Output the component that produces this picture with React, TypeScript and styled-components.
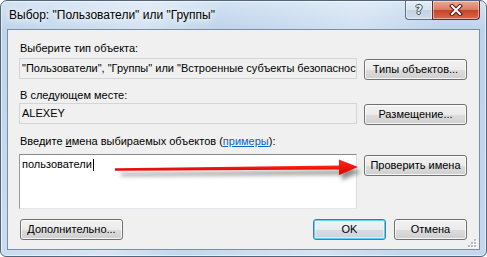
import React from 'react';
import styled, { createGlobalStyle } from 'styled-components';

const GlobalStyle = createGlobalStyle`
  html, body { margin: 0; padding: 0; background: #ffffff; }
  body { font-family: "Liberation Sans", Arial, sans-serif; }
`;

const Window = styled.div`
  position: relative;
  box-sizing: border-box;
  width: 487px;
  height: 257px;
  display: flex;
  flex-direction: column;
  padding: 0 6px 6px 6px;
  border: 1px solid #52657a;
  border-radius: 7px 7px 6px 6px;
  background:
    linear-gradient(100deg, rgba(255,255,255,0) 0%, rgba(255,255,255,0.35) 28%, rgba(255,255,255,0) 42%, rgba(255,255,255,0.3) 68%, rgba(255,255,255,0) 84%),
    linear-gradient(180deg, #d3e3f3 0px, #bed4eb 28px, #c3d8ee 100%);
  box-shadow: inset 0 0 0 1px rgba(255,255,255,0.55);
  overflow: hidden;
`;

const TitleBar = styled.div`
  height: 28px;
  flex-shrink: 0;
  display: flex;
  align-items: flex-start;
  justify-content: space-between;
`;

const Title = styled.div`
  padding: 7px 0 0 2px;
  font-size: 12px;
  line-height: 15px;
  color: #000;
  white-space: nowrap;
  text-shadow: 0 0 6px #fff, 0 0 10px rgba(255,255,255,0.9);
`;

const CaptionButtons = styled.div`
  display: flex;
`;

const CaptionButton = styled.div<{ $kind: 'help' | 'close' }>`
  box-sizing: border-box;
  height: 19px;
  width: ${p => (p.$kind === 'help' ? 27 : 48)}px;
  display: flex;
  align-items: center;
  justify-content: center;
  border: 1px solid ${p => (p.$kind === 'help' ? '#5d6f84' : '#6b2b22')};
  border-top: none;
  ${p => (p.$kind === 'help' ? 'border-right: none;' : '')}
  border-radius: ${p => (p.$kind === 'help' ? '0 0 0 4px' : '0 0 4px 0')};
  background: ${p =>
    p.$kind === 'help'
      ? 'linear-gradient(180deg, #e6eef7 0%, #d6e2ef 50%, #c2d2e3 52%, #cfdcea 100%)'
      : 'linear-gradient(180deg, #e9a895 0%, #dc7d66 48%, #c8432b 52%, #d56a4c 100%)'};
  box-shadow: inset 0 0 0 1px rgba(255,255,255,0.45);
`;

const HelpGlyph = styled.span`
  font-family: "DejaVu Sans", sans-serif;
  font-weight: bold;
  font-size: 12px;
  line-height: 12px;
  color: #eef2f6;
  text-shadow: 1px 0 0 #3a4858, -1px 0 0 #3a4858, 0 1px 0 #3a4858, 0 -1px 0 #3a4858;
`;

const Client = styled.div`
  position: relative;
  flex: 1;
  display: flex;
  flex-direction: column;
  padding: 0 12px 0 11px;
  border: 1px solid #7b8ea3;
  background: #f0f0f0;
  font-size: 11px;
  line-height: 13px;
  color: #000;
`;

const Label = styled.div<{ $top: number }>`
  margin-top: ${p => p.$top}px;
  padding-left: 1px;
  height: 13px;
  white-space: nowrap;
`;

const AccessKey = styled.span`
  text-decoration: underline;
`;

const Link = styled.span`
  color: #0066cc;
  text-decoration: underline;
`;

const Row = styled.div<{ $top: number }>`
  margin-top: ${p => p.$top}px;
  display: flex;
  align-items: flex-start;
  gap: 7px;
`;

const ReadOnlyBox = styled.div`
  box-sizing: border-box;
  flex-shrink: 0;
  width: 338px;
  height: 21px;
  padding: 3px 2px;
  border: 1px solid #d5d5d5;
  background: #f0f0f0;
  overflow: hidden;
  white-space: nowrap;
`;

const NamesBox = styled.div`
  box-sizing: border-box;
  flex-shrink: 0;
  width: 338px;
  height: 55px;
  padding: 3px 2px;
  border: 1px solid;
  border-color: #8a8a8a #dadde2 #e3e6ea #9a9a9a;
  background: #ffffff;
  white-space: nowrap;
`;

const Caret = styled.span`
  display: inline-block;
  width: 1px;
  height: 12px;
  margin-left: 1px;
  background: #000;
  vertical-align: -3px;
`;

const Button = styled.button<{ $width: number; $drop?: number; $isDefault?: boolean; $left?: number }>`
  box-sizing: border-box;
  flex-shrink: 0;
  width: ${p => p.$width}px;
  height: 21px;
  margin: ${p => p.$drop ?? 0}px 0 0 ${p => p.$left ?? 0}px;
  padding: 0;
  font-family: "Liberation Sans", Arial, sans-serif;
  font-size: 11px;
  line-height: 13px;
  color: #000;
  border: 1px solid ${p => (p.$isDefault ? '#3c7fb1' : '#707070')};
  border-radius: 3px;
  background: ${p =>
    p.$isDefault
      ? 'linear-gradient(180deg, #eef3f6 0%, #e6ecf0 50%, #d5dde3 51%, #c9d3da 100%)'
      : 'linear-gradient(180deg, #f2f2f2 0%, #ebebeb 50%, #dddddd 51%, #cfcfcf 100%)'};
  box-shadow: ${p =>
    p.$isDefault
      ? 'inset 0 0 0 1px #5fd0f4, inset 0 0 0 2px rgba(255,255,255,0.45)'
      : 'inset 0 0 0 1px rgba(255,255,255,0.8)'};
`;

const BottomBar = styled.div`
  margin-top: 10px;
  display: flex;
  align-items: flex-start;
`;

const Spacer = styled.div`
  flex: 1;
`;

const Gap = styled.div<{ $w: number }>`
  width: ${p => p.$w}px;
  flex-shrink: 0;
`;

const Grip = styled.svg`
  position: absolute;
  right: 2px;
  bottom: 1px;
`;

const Arrow = styled.svg`
  position: absolute;
  left: 99px;
  top: 149px;
  pointer-events: none;
  overflow: visible;
`;

const CloseIcon = () => (
  <svg width="14" height="12" viewBox="0 0 14 12">
    <path d="M3 2 L11 10 M11 2 L3 10" stroke="#4a1a14" strokeWidth="4" strokeLinecap="square" fill="none" />
    <path d="M3 2 L11 10 M11 2 L3 10" stroke="#ffffff" strokeWidth="2" strokeLinecap="square" fill="none" />
  </svg>
);

export default function App() {
  return (
    <>
      <GlobalStyle />
      <Window>
        <TitleBar>
          <Title>Выбор: "Пользователи" или "Группы"</Title>
          <CaptionButtons>
            <CaptionButton $kind="help">
              <HelpGlyph>?</HelpGlyph>
            </CaptionButton>
            <CaptionButton $kind="close">
              <CloseIcon />
            </CaptionButton>
          </CaptionButtons>
        </TitleBar>
        <Client>
          <Label $top={12}>Выберите тип объекта:</Label>
          <Row $top={3}>
            <ReadOnlyBox>"Пользователи", "Группы" или "Встроенные субъекты безопасности"</ReadOnlyBox>
            <Button $width={103} $drop={1}>Типы объектов...</Button>
          </Row>
          <Label $top={9}>В следующем месте:</Label>
          <Row $top={1}>
            <ReadOnlyBox>ALEXEY</ReadOnlyBox>
            <Button $width={103} $drop={1}>Размещение...</Button>
          </Row>
          <Label $top={10}>
            Введите <AccessKey>и</AccessKey>мена выбираемых объектов (<Link>примеры</Link>):
          </Label>
          <Row $top={6}>
            <NamesBox>
              пользователи<Caret />
            </NamesBox>
            <Button $width={103} $drop={1}>Проверить имена</Button>
          </Row>
          <BottomBar>
            <Button $width={103} $left={1}>Дополнительно...</Button>
            <Spacer />
            <Button $width={73} $isDefault>OK</Button>
            <Gap $w={8} />
            <Button $width={73}>Отмена</Button>
          </BottomBar>
          <Grip width="9" height="9" viewBox="0 0 9 9">
            {[
              [6, 0],
              [3, 3],
              [6, 3],
              [0, 6],
              [3, 6],
              [6, 6],
            ].map(([x, y]) => (
              <g key={`${x}-${y}`}>
                <rect x={x + 1} y={y + 1} width="2" height="2" fill="#ffffff" />
                <rect x={x} y={y} width="2" height="2" fill="#b4bcc6" />
              </g>
            ))}
          </Grip>
        </Client>
        <Arrow width="275" height="40" viewBox="0 0 275 40">
          <defs>
            <filter id="arrowShadow" x="-10%" y="-50%" width="120%" height="200%">
              <feGaussianBlur stdDeviation="2" />
            </filter>
            <linearGradient id="arrowFill" x1="0" y1="0" x2="0" y2="1">
              <stop offset="0" stopColor="#ff2a1a" />
              <stop offset="1" stopColor="#e00000" />
            </linearGradient>
          </defs>
          <g filter="url(#arrowShadow)" opacity="0.55" transform="translate(3 5)">
            <polygon points="18,18.3 241,15.5 241,19.5 18,20.7" fill="#303030" />
            <polygon points="239,9.5 258,17 239,25" fill="#303030" />
          </g>
          <polygon points="15,18.3 241,15.5 241,19.5 15,20.7" fill="url(#arrowFill)" />
          <polygon points="239,9.5 258,17 239,25" fill="url(#arrowFill)" />
        </Arrow>
      </Window>
    </>
  );
}
